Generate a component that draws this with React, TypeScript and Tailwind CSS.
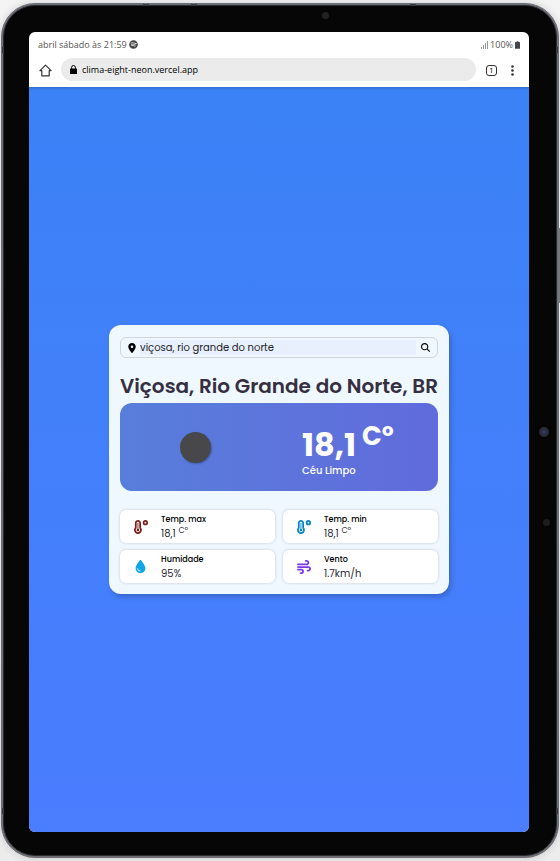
import type { ReactNode } from "react";
import {
  FaDroplet,
  FaLocationDot,
  FaMagnifyingGlass,
  FaSpotify,
  FaTemperatureHigh,
  FaWind,
} from "react-icons/fa6";

function Tile({ icon, label, children }: { icon: ReactNode; label: string; children: ReactNode }) {
  return (
    <div className="flex items-center rounded-md bg-white shadow-[0_0_3px_rgba(0,0,0,0.2)]">
      <div className="flex w-[41px] justify-center">{icon}</div>
      <dl>
        <dt className="text-[8px] font-medium leading-[14px] text-black">{label}</dt>
        <dd className="text-[10px] leading-[13px] text-[#2a2a35]">{children}</dd>
      </dl>
    </div>
  );
}

function StatusBar() {
  return (
    <div className="flex h-6 items-center justify-between pl-[9px] pr-[9px] pt-px font-['Open_Sans','Noto_Sans',sans-serif] text-[9px] text-[#555]">
      <div className="flex items-center gap-[2px]">
        <span>abril sábado às 21:59</span>
        <FaSpotify className="size-[9px] text-[#444]" />
      </div>
      <div className="flex items-center gap-[2px]">
        <svg viewBox="0 0 7 8" className="h-2 w-[7px]" fill="#999">
          <rect x="0" y="6" width="1" height="2" />
          <rect x="2" y="4" width="1" height="4" />
          <rect x="4" y="2" width="1" height="6" />
          <rect x="6" y="0" width="1" height="8" />
        </svg>
        <span>100%</span>
        <svg viewBox="0 0 6 9" className="h-2 w-[5px]" fill="#444">
          <path d="M2 0h2v1h1.4q.6 0 .6.6v6.8q0 .6-.6.6H.6Q0 9 0 8.400V1.600Q0 1 .6 1H2z" />
        </svg>
      </div>
    </div>
  );
}

function Toolbar() {
  return (
    <div className="flex h-[31px] items-start gap-[9px] pl-[10px] pr-[10px] pt-[2px]">
      <button aria-label="Início" className="flex h-6 w-[13px] items-center justify-center">
        <svg viewBox="0 0 13 13" className="size-[13px]" fill="none" stroke="#333" strokeWidth="1.200">
          <path d="M1 6.700 6.500 1.200 12 6.700H10.200V11.800H2.800V6.700Z" strokeLinejoin="round" />
        </svg>
      </button>
      <div className="flex h-[23px] flex-1 items-center gap-[5px] rounded-full bg-[#ebebeb] pl-[9px] pr-3">
        <svg viewBox="0 0 7 9" className="h-[9px] w-[7px] shrink-0">
          <rect x="0" y="3.500" width="7" height="5.500" rx=".6" fill="#000" />
          <path d="M1.600 4V2.400a1.900 1.900 0 0 1 3.800 0V4" fill="none" stroke="#000" />
        </svg>
        <input
          aria-label="Endereço"
          defaultValue="clima-eight-neon.vercel.app"
          className="w-full min-w-0 bg-transparent font-['Open_Sans','Noto_Sans',sans-serif] text-[9px] text-black outline-none"
        />
      </div>
      <button aria-label="Abas" className="flex h-6 w-3 items-center justify-center">
        <span className="flex size-[11px] items-center justify-center rounded-[3px] border border-[#333] font-['Inter',sans-serif] text-[6px] font-semibold text-[#333]">
          1
        </span>
      </button>
      <button aria-label="Mais opções" className="flex h-6 w-[13px] items-center justify-center">
        <svg viewBox="0 0 3 11" className="h-[11px] w-[3px]" fill="#333">
          <circle cx="1.500" cy="1.500" r="1.300" />
          <circle cx="1.500" cy="5.500" r="1.300" />
          <circle cx="1.500" cy="9.500" r="1.300" />
        </svg>
      </button>
    </div>
  );
}

function WeatherCard() {
  return (
    <section className="rounded-xl bg-[#f0f8ff] px-[11px] pb-[11px] pt-3 font-['Poppins','Inter',sans-serif] shadow-[2px_3px_5px_rgba(0,0,0,0.2)]">
      <form className="flex h-[21px] items-center rounded-md border border-[#d1d5db] pl-[7px] pr-[7px]">
        <label htmlFor="city" aria-label="Cidade">
          <FaLocationDot className="h-[10px] w-2 text-black" />
        </label>
        <input
          id="city"
          defaultValue="viçosa, rio grande do norte"
          className="ml-1 h-[15px] min-w-0 flex-1 bg-[#e8f0fe] text-[10px] text-[#222] outline-none"
        />
        <button type="button" aria-label="Buscar" className="ml-[5px]">
          <FaMagnifyingGlass className="size-[9px] text-black" />
        </button>
      </form>
      <h1 className="mt-3 whitespace-nowrap pb-px text-[20px] font-semibold leading-8 text-[#352f3f]">
        Viçosa, Rio Grande do Norte, BR
      </h1>
      <div className="flex h-[88px] items-center rounded-xl bg-linear-to-r from-[#587edb] to-[#616bdc]">
        <div className="flex w-[151px] justify-center">
          <div className="size-[31px] rounded-full bg-[#48484a] shadow-[1px_1px_2px_rgba(0,0,0,0.25)]" />
        </div>
        <div className="pl-[31px] pt-[6px] text-white">
          <p className="flex items-start gap-[6px] font-bold">
            <span className="pt-[5px] text-[32px] leading-9">18,1</span>
            <span className="text-[26px] leading-7">Cº</span>
          </p>
          <p className="text-[10px] font-medium leading-4">Céu Limpo</p>
        </div>
      </div>
      <div className="mt-[19px] grid auto-rows-[33px] grid-cols-2 gap-x-2 gap-y-[7px]">
        <Tile icon={<FaTemperatureHigh className="size-[14px] text-[#7f1d1d]" />} label="Temp. max">
          18,1 <sup className="text-[8px] leading-3">Cº</sup>
        </Tile>
        <Tile icon={<FaTemperatureHigh className="size-[14px] text-[#0284c7]" />} label="Temp. min">
          18,1 <sup className="text-[8px] leading-3">Cº</sup>
        </Tile>
        <Tile icon={<FaDroplet className="size-[13px] text-[#0ea5e9]" />} label="Humidade">
          95%
        </Tile>
        <Tile icon={<FaWind className="size-[14px] text-[#7c3aed]" />} label="Vento">
          1.7km/h
        </Tile>
      </div>
    </section>
  );
}

export default function App() {
  return (
    <div className="flex min-h-screen bg-linear-to-b from-[#f4f4f4] via-white to-[#ececec] px-[1px] py-[3px]">
      <div className="relative flex flex-1 rounded-[34px] border border-[#6c6e75] bg-[#6c6e75] p-px shadow-[0_0_8px_rgba(0,0,0,0.15)]">
        <div className="flex flex-1 rounded-[32px] border border-[#2c2d31] bg-[#060606] pb-[23px] pl-[25px] pr-[27px] pt-[26px]">
          <div className="flex flex-1 flex-col overflow-hidden rounded-md bg-white">
            <header className="relative shadow-[0_1px_3px_rgba(0,0,0,0.2)]">
              <StatusBar />
              <Toolbar />
            </header>
            <main className="flex flex-1 items-center justify-center bg-linear-to-b from-[#3b82f6] to-[#4a7dff]">
              <WeatherCard />
            </main>
          </div>
        </div>
        <span className="absolute left-[320px] top-[8px] size-[7px] rounded-full bg-[#222224]" />
        <span className="absolute right-[9px] top-[423px] flex size-[10px] items-center justify-center rounded-full bg-[#2b2c30]">
          <span className="size-1 rounded-full bg-[#303a80]" />
        </span>
        <span className="absolute right-[8px] top-[515px] size-[7px] rounded-full bg-[#1d1d1f]" />
        <span className="absolute -right-[2px] top-[224px] h-[75px] w-[2px] bg-[#77787d]" />
        <span className="absolute left-[141px] top-0 h-[2px] w-[6px] bg-[#3a3b40]" />
        <span className="absolute left-[189px] top-0 h-[2px] w-[6px] bg-[#3a3b40]" />
        <span className="absolute left-[408px] top-0 h-[2px] w-[6px] bg-[#3a3b40]" />
        <span className="absolute left-0 top-[43px] h-[6px] w-[2px] bg-[#3a3b40]" />
        <span className="absolute right-0 top-[43px] h-[6px] w-[2px] bg-[#3a3b40]" />
        <span className="absolute bottom-[43px] left-0 h-[6px] w-[2px] bg-[#3a3b40]" />
        <span className="absolute bottom-[43px] right-0 h-[6px] w-[2px] bg-[#3a3b40]" />
      </div>
    </div>
  );
}
